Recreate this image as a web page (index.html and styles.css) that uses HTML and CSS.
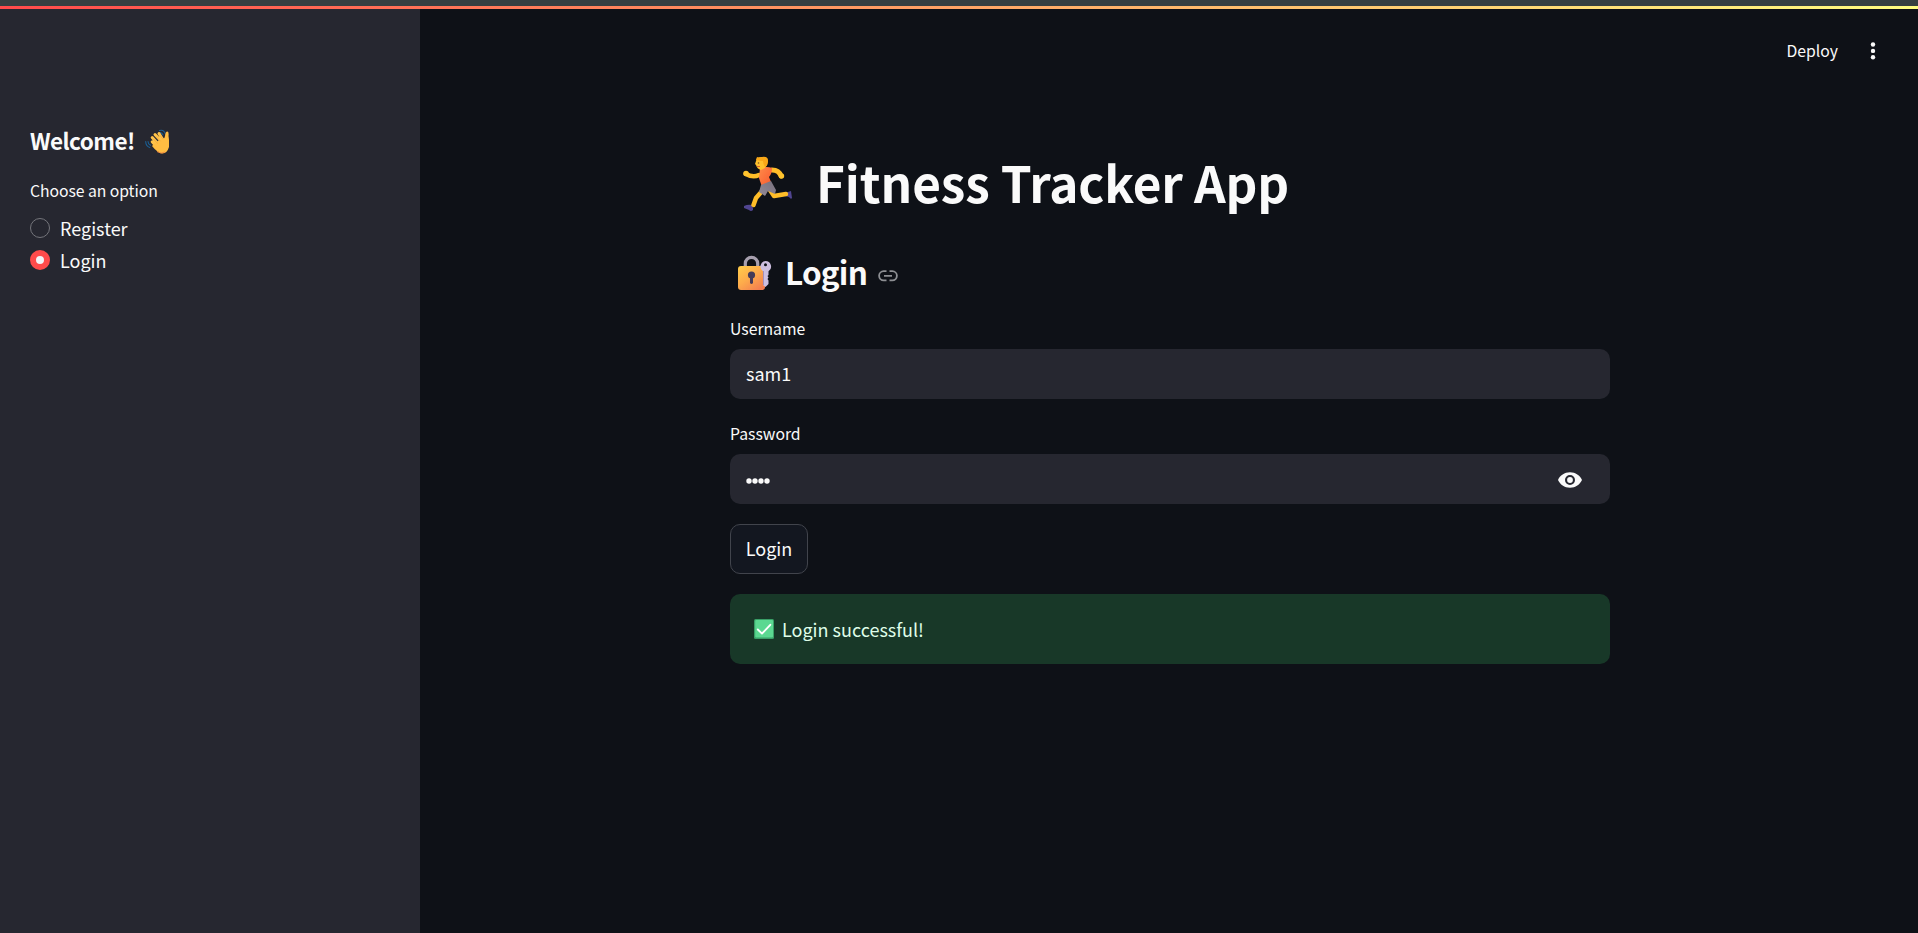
FILE: index.html
```html
<!DOCTYPE html>
<html lang="en">
<head>
<meta charset="utf-8">
<title>Fitness Tracker App</title>
<link rel="stylesheet" href="styles.css">
</head>
<body>
<div class="window-edge"></div>
<div class="decoration"></div>
<div class="app">
  <aside class="sidebar">
    <h3 class="welcome"><span>Welcome!</span>
      <svg class="wave" viewBox="0 0 24 25">
        <g fill="none" stroke="#1b5f94" stroke-width="1.1" stroke-linecap="round"><path d="M14.5 1.5Q19 .3 20.500 5.200M14 3.700Q17 3 18 6M.7 12.500Q.8 17.300 4.800 18.500M3 12.500Q3 15 5.500 16.200"/></g>
        <path d="M8 17 14 11 20 14 18 19 14 20Z" fill="#ffbd42"/>
        <g stroke="#ffc34a" stroke-width="3" stroke-linecap="round"><path d="M7.200 12.800 12 18M7.200 8.500 14 16M10 5.500 17 13M14 4.500 18 11"/></g>
        <path d="M9 15 18 9.500Q19.500 10 20 7 20.500 2.500 22.500 2.600 24 3 23.500 7 24.500 13 24 18 22 24.500 17.500 24.500 12.500 24 7 17Z" fill="#ffbd42"/>
        <path d="M8.500 10.200 12.500 14.500M11 7.500 15.500 12.200M14.800 6.300 18 10" stroke="#eda03b" stroke-width=".6" fill="none"/>
        <path d="M12 22.500Q16 25.500 20 23" stroke="#f28e42" stroke-width="1" fill="none"/>
      </svg>
    </h3>
    <div class="radio-label">Choose an option</div>
    <div class="radio"><span class="dot"></span><span>Register</span></div>
    <div class="radio"><span class="dot dot-on"></span><span>Login</span></div>
  </aside>
  <main class="main">
    <header class="toolbar">
      <span class="deploy">Deploy</span>
      <svg class="kebab" viewBox="0 0 6 18"><g fill="#fafafa"><circle cx="3" cy="2.500" r="2.200"/><circle cx="3" cy="8.900" r="2.200"/><circle cx="3" cy="15.200" r="2.200"/></g></svg>
    </header>
    <section class="content">
      <h1 class="title">
        <svg class="runner" viewBox="0 0 50 56">
          <defs>
            <linearGradient id="shirt" x1="0" y1="0" x2="1" y2="1"><stop offset="0" stop-color="#ff8b49"/><stop offset="1" stop-color="#f9582f"/></linearGradient>
            <linearGradient id="shorts" x1="0" y1="1" x2="1" y2="0"><stop offset="0" stop-color="#928a96"/><stop offset="1" stop-color="#77707e"/></linearGradient>
          </defs>
          <path d="M42 37 48 35 49 42Q48 44 46 41L42 40Z" fill="#504590"/>
          <path d="M9 49 10 52 10 54Q8 56 6 54L1 52 1 50Q5 48 9 49Z" fill="#504590"/>
          <g fill="none" stroke="#ffbd28" stroke-linecap="round" stroke-linejoin="round"><path d="M20 34 13 42 10.500 49" stroke-width="4.500"/><path d="M27 34 31 40 43 38" stroke-width="4.500"/><path d="M29 14Q36 14 38 20" stroke-width="5"/><path d="M3 18Q10 22 16 19" stroke-width="4.500"/></g>
          <circle cx="3" cy="17.500" r="2.800" fill="#ffc42e"/><circle cx="38.500" cy="20" r="2.700" fill="#ffc42e"/>
          <path d="M17 12Q24 10 29 12 29 18 26 21L28 26 19 31 16 22Z" fill="url(#shirt)"/>
          <path d="M18 29 28 25 33 34 32 38 25 35 22 40 16 36Z" fill="url(#shorts)"/>
          <path d="M14 2Q19 0 24 2 26 7 22 12L18 14Q14 13 13 9L12 8 13 5Z" fill="#ffc02c"/>
          <path d="M14 1Q17 2 19 1 25 0 25 5 25 10 22 11 20 8 20 5 17 5 13 4Z" fill="#f9a717"/>
          <circle cx="15.500" cy="7" r=".8" fill="#70532c"/><path d="M14 10.500H17" stroke="#d9632d"/>
        </svg>
        <span>Fitness Tracker App</span>
      </h1>
      <h2 class="subtitle">
        <svg class="lock" viewBox="0 0 34 35">
          <defs><linearGradient id="lockBody" x1="0" y1="0" x2=".8" y2="1"><stop offset="0" stop-color="#ffcd49"/><stop offset=".5" stop-color="#fdac4b"/><stop offset="1" stop-color="#f37d50"/></linearGradient></defs>
          <path d="M7.300 13V8.500a6.200 6.200 0 0 1 12.400 0V13" fill="none" stroke="#a69fae" stroke-width="3.200"/>
          <rect x="0" y="11" width="27" height="24" rx="3" fill="url(#lockBody)"/>
          <circle cx="13.500" cy="20" r="3.600" fill="#443b58"/><path d="M12 21H15V28Q13.500 30 12 28Z" fill="#443b58"/>
          <path fill-rule="evenodd" d="M27.500 6a5.600 5.600 0 0 1 3 10.300V20l-1 1 1 1.500-1 1.500 1 1.500V29l-3 3-2.500-2V16.300A5.600 5.600 0 0 1 27.500 6Zm0 2.300a1.500 1.500 0 1 0 0 3 1.500 1.500 0 0 0 0-3Z" fill="#cdbfe0"/><path d="M25.500 16V30" stroke="#a590bd"/>
        </svg>
        <span>Login</span>
        <svg class="anchor" viewBox="0 0 20 12"><path d="M8.500 1.200H5.700a4.600 4.600 0 0 0 0 9.200H8.500M11.500 1.200h2.800a4.600 4.600 0 0 1 0 9.200H11.500M6 5.800h8" fill="none" stroke="#8d8f93" stroke-width="1.800"/></svg>
      </h2>
      <div class="label">Username</div>
      <div class="input"><span>sam1</span></div>
      <div class="label">Password</div>
      <div class="input password">
        <svg class="bullets" viewBox="0 0 24 6"><g fill="#fafafa"><circle cx="3" cy="3" r="2.700"/><circle cx="9" cy="3" r="2.700"/><circle cx="15" cy="3" r="2.700"/><circle cx="21" cy="3" r="2.700"/></g></svg>
        <svg class="eye" viewBox="0 0 24 16"><path fill="#fafafa" fill-rule="evenodd" d="M12 .3C6.500.3 2 3.500 0 8c2 4.500 6.500 7.700 12 7.700S22 12.500 24 8C22 3.500 17.500.3 12 .3ZM12 13a5 5 0 1 1 0-10 5 5 0 0 1 0 10Z"/><circle cx="12" cy="8" r="2.900" fill="#fafafa"/></svg>
      </div>
      <button class="button">Login</button>
      <div class="alert">
        <svg class="check" viewBox="0 0 20 20"><rect width="20" height="20" rx="1.500" fill="#399f67"/><rect x="1.200" y="1" width="17.800" height="17.500" rx="1" fill="#5bd891"/><path d="M3.800 10.500 8 14.600 16.300 5.800" fill="none" stroke="#fff" stroke-width="1.900" stroke-linecap="round" stroke-linejoin="round"/></svg>
        <span>Login successful!</span>
      </div>
    </section>
  </main>
</div>
</body>
</html>
```
FILE: styles.css
```css
* { box-sizing: border-box; }
body {
  margin: 0;
  height: 933px;
  display: flex;
  flex-direction: column;
  overflow: hidden;
  background: #0e1117;
  color: #fafafa;
  font-family: "Noto Sans CJK SC", "Noto Sans", sans-serif;
  font-size: 18px;
}
svg { display: block; flex: none; }
h1, h2, h3 { margin: 0; }
.window-edge { height: 6px; background: #363f41; flex: none; }
.decoration { height: 3px; flex: none; background: linear-gradient(90deg, #ff4b4b, #fffd80); }
.app { display: flex; flex: 1; min-height: 0; }
.sidebar { width: 420px; padding: 116px 30px 0; background: #262730; }
.welcome {
  display: flex;
  height: 30px;
  font-size: 22.5px;
  line-height: 30px;
  font-weight: 600;
  letter-spacing: -0.55px;
}
.wave { width: 24px; height: 25px; margin: 4px 0 0 10px; }
.radio-label { margin: 23px 0 8px; font-size: 15.75px; line-height: 26px; letter-spacing: -0.06px; }
.radio { display: flex; align-items: center; gap: 10px; height: 32px; line-height: 32px; }
.dot {
  width: 20px;
  height: 20px;
  border-radius: 50%;
  border: 1px solid #74757b;
}
.dot-on { border: 6px solid #ff4b4b; background: #f3f4f7; }
.main { flex: 1; display: flex; flex-direction: column; }
.toolbar {
  height: 84px;
  display: flex;
  justify-content: flex-end;
  align-items: center;
  padding: 0 42px 0 0;
  gap: 32px;
  font-size: 15.75px;
}
.deploy { padding-bottom: 2px; }
.kebab { width: 6px; height: 18px; }
.content { width: 880px; margin: 55px 0 0 310px; }
.title {
  display: flex;
  height: 66px;
  font-size: 49.5px;
  line-height: 68px;
  font-weight: 700;
  letter-spacing: -0.1px;
}
.runner { width: 50px; height: 56px; margin: 8px 23px 0 13px; }
.subtitle {
  display: flex;
  height: 42px;
  margin-top: 36px;
  font-size: 31.5px;
  line-height: 42px;
  font-weight: 600;
  letter-spacing: -0.8px;
}
.lock { width: 34px; height: 35px; margin: 5px 13px 0 8px; }
.anchor { width: 20px; height: 12px; margin: 20px 0 0 11px; }
.label { margin: 24px 0 7px; font-size: 15.75px; line-height: 26px; }
.input {
  height: 50px;
  padding: 0 28px 2px 16px;
  display: flex;
  align-items: center;
  justify-content: space-between;
  border-radius: 10px;
  background: #262730;
}
.input + .label { margin-top: 22px; }
.bullets { width: 24px; height: 6px; margin-top: 5px; }
.eye { width: 24px; height: 16px; margin-top: 3px; }
.button {
  display: block;
  width: 78px;
  height: 50px;
  margin: 20px 0;
  padding: 0 0 2px;
  border: 1px solid #41444c;
  border-radius: 10px;
  background: #131720;
  color: inherit;
  font: inherit;
}
.alert {
  height: 70px;
  padding: 0 24px;
  display: flex;
  align-items: center;
  gap: 8px;
  border-radius: 10px;
  background: #183828;
  color: #dffde9;
}
.check { width: 20px; height: 20px; }
```
